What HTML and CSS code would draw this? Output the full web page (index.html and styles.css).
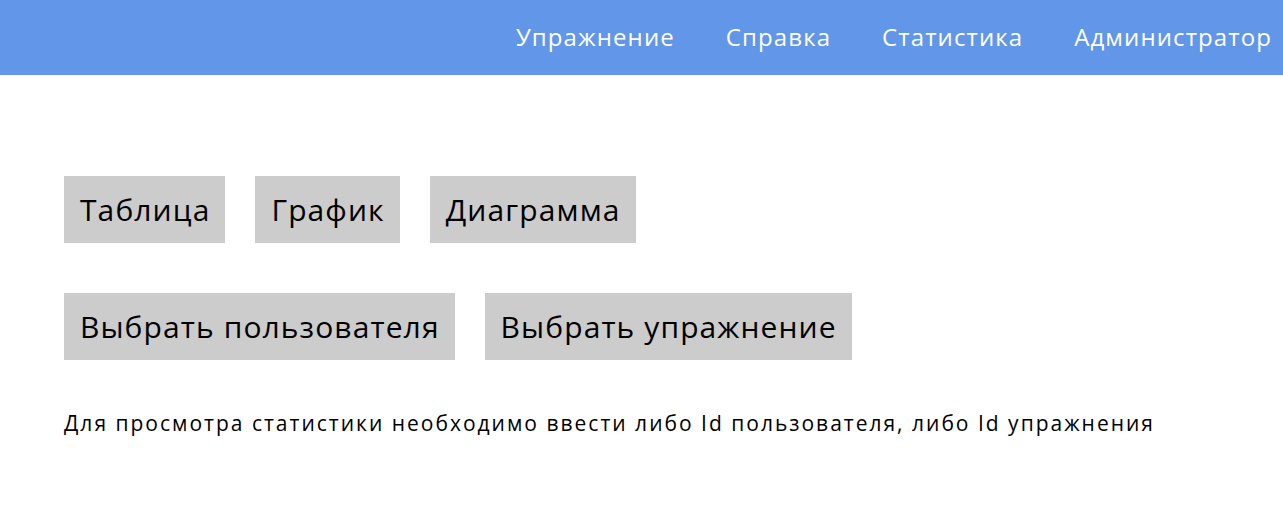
FILE: index.html
```html
<!DOCTYPE html>
<html lang="ru">
<head>
<meta charset="utf-8">
<title>Статистика</title>
<link rel="stylesheet" href="styles.css">
</head>
<body>
<header class="topbar">
  <nav class="nav">
    <a class="nav-link" href="#">Упражнение</a>
    <a class="nav-link" href="#">Справка</a>
    <a class="nav-link" href="#">Статистика</a>
    <a class="nav-link" href="#">Администратор</a>
  </nav>
</header>
<main class="content">
  <div class="btn-row">
    <button class="btn">Таблица</button>
    <button class="btn">График</button>
    <button class="btn">Диаграмма</button>
  </div>
  <div class="btn-row">
    <button class="btn">Выбрать пользователя</button>
    <button class="btn">Выбрать упражнение</button>
  </div>
  <p class="hint">Для просмотра статистики необходимо ввести либо Id пользователя, либо Id упражнения</p>
</main>
</body>
</html>
```
FILE: styles.css
```css
* { box-sizing: border-box; }
body {
  margin: 0;
  font-family: "Open Sans", "Noto Sans", sans-serif;
  background: #fff;
  color: #000;
}
.topbar {
  height: 75px;
  background: #6196e8;
  display: flex;
  align-items: center;
  justify-content: flex-end;
  padding-right: 11px;
}
.nav {
  display: flex;
  gap: 51px;
}
.nav-link {
  color: #fff;
  text-decoration: none;
  font-size: 24px;
  line-height: 30px;
  letter-spacing: 1.1px;
  margin-bottom: 1px;
}
.content {
  padding: 101px 64px 0;
}
.btn-row {
  display: flex;
  gap: 30px;
  margin-bottom: 50px;
}
.btn {
  font-family: inherit;
  font-size: 30px;
  line-height: 37px;
  letter-spacing: 1.1px;
  height: 67px;
  padding: 0 15px 0 16px;
  background: #cccccc;
  color: #000;
  border: none;
  border-radius: 0;
}
.hint {
  margin: 0;
  font-size: 21px;
  line-height: 26px;
  letter-spacing: 2px;
  color: #000;
}
```
